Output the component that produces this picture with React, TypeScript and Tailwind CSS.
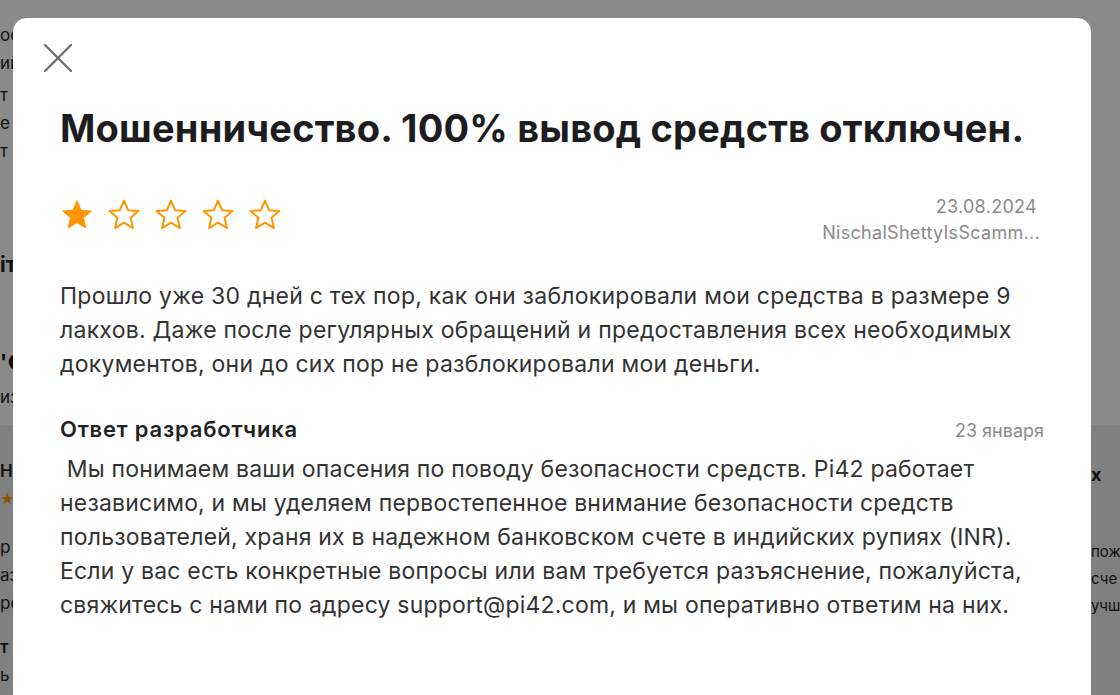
const STAR = '12,1.8 14.9,8.6 22.2,9.2 16.6,14 18.3,21.2 12,17.4 5.7,21.2 7.4,14 1.8,9.2 9.1,8.6';

const Star = ({ filled }: { filled: boolean }) => (
  <svg width="34" height="34" viewBox="0 0 24 24">
    <polygon
      points={STAR}
      fill={filled ? '#ff9500' : 'none'}
      stroke="#ff9500"
      strokeWidth={filled ? 0.6 : 1.4}
      strokeLinejoin="round"
    />
  </svg>
);

const review = [
  'Прошло уже 30 дней с тех пор, как они заблокировали мои средства в размере 9',
  'лакхов. Даже после регулярных обращений и предоставления всех необходимых',
  'документов, они до сих пор не разблокировали мои деньги.',
];

const reply = [
  '\u00a0Мы понимаем ваши опасения по поводу безопасности средств. Pi42 работает',
  'независимо, и мы уделяем первостепенное внимание безопасности средств',
  'пользователей, храня их в надежном банковском счете в индийских рупиях (INR).',
  'Если у вас есть конкретные вопросы или вам требуется разъяснение, пожалуйста,',
  'свяжитесь с нами по адресу support@pi42.com, и мы оперативно ответим на них.',
];

export default function App() {
  return (
    <div className="relative h-[695px] w-[1120px] overflow-hidden bg-white font-['Inter',sans-serif]">
      {/* page behind the sheet */}
      <div className="flex h-full flex-col text-[17px] text-[#1c1c1e]">
        <div className="flex h-[425px] justify-between bg-white">
          <div className="flex w-[40px] flex-col pt-[21px] leading-[28px]">
            <span>ос</span>
            <span>ий</span>
            <span className="mt-[4px]">т</span>
            <span>е</span>
            <span>т</span>
            <span className="mt-[86px] text-[21px] font-bold">іт</span>
            <span className="mt-[70px] text-[21px] font-bold">'●</span>
            <span className="mt-[6px]">из</span>
          </div>
        </div>
        <div className="flex flex-1 justify-between bg-[#ececec]">
          <div className="flex w-[40px] flex-col pt-[32px] leading-[28px]">
            <span className="font-semibold">Но</span>
            <span className="text-[14px] text-[#ff9500]">★★</span>
            <span className="mt-[20px]">р</span>
            <span>аз</span>
            <span>ро</span>
            <span className="mt-[16px] font-semibold">т</span>
            <span>ь</span>
          </div>
          <div className="flex w-[29px] flex-col overflow-hidden pt-[36px] text-[15px] leading-[27px]">
            <span className="text-[18px] font-bold">х</span>
            <span className="mt-[50px]">пож</span>
            <span>сче</span>
            <span>учш</span>
          </div>
        </div>
      </div>

      <div className="absolute inset-0 bg-black/[0.46]" />

      {/* review sheet */}
      <div className="absolute left-[13px] top-[18px] h-[720px] w-[1078px] rounded-[14px] bg-white px-[47px] pt-[25px]">
        <button className="-ml-[17px] flex h-[30px] w-[30px] items-center justify-center">
          <svg width="30" height="30" viewBox="0 0 30 30">
            <path d="M2 2L28 28M28 2L2 28" stroke="#6e6e6e" strokeWidth="2.3" strokeLinecap="round" />
          </svg>
        </button>

        <h1 className="mt-[36px] whitespace-nowrap text-[38px] font-bold leading-none tracking-[0.005em] text-[#1d1d1f]">
          Мошенничество. 100% вывод средств отключен.
        </h1>

        <div className="mt-[47px] flex items-start justify-between">
          <div className="mt-[4px] flex gap-[13px]">
            <Star filled />
            <Star filled={false} />
            <Star filled={false} />
            <Star filled={false} />
            <Star filled={false} />
          </div>
          <div className="mr-[4px] flex flex-col items-end text-[18px] leading-[26px] tracking-[0.3px] text-[#8a8a8e]">
            <span className="mr-[3px]">23.08.2024</span>
            <span>NischalShettyIsScamm...</span>
          </div>
        </div>

        <div className="mt-[33px] text-[23px] leading-[34px] tracking-[0.25px] text-[#333333]">
          {review.map((l) => (
            <div key={l} className="whitespace-nowrap">{l}</div>
          ))}
        </div>

        <div className="mt-[31px] flex items-baseline justify-between">
          <span className="text-[22px] font-semibold leading-[34px] tracking-[0.8px] text-[#222222]">
            Ответ разработчика
          </span>
          <span className="text-[18px] text-[#8a8a8e]">23 января</span>
        </div>

        <div className="mt-[6px] text-[23px] leading-[34px] tracking-[0.2px] text-[#333333]">
          {reply.map((l) => (
            <div key={l} className="whitespace-nowrap">{l}</div>
          ))}
        </div>
      </div>
    </div>
  );
}
